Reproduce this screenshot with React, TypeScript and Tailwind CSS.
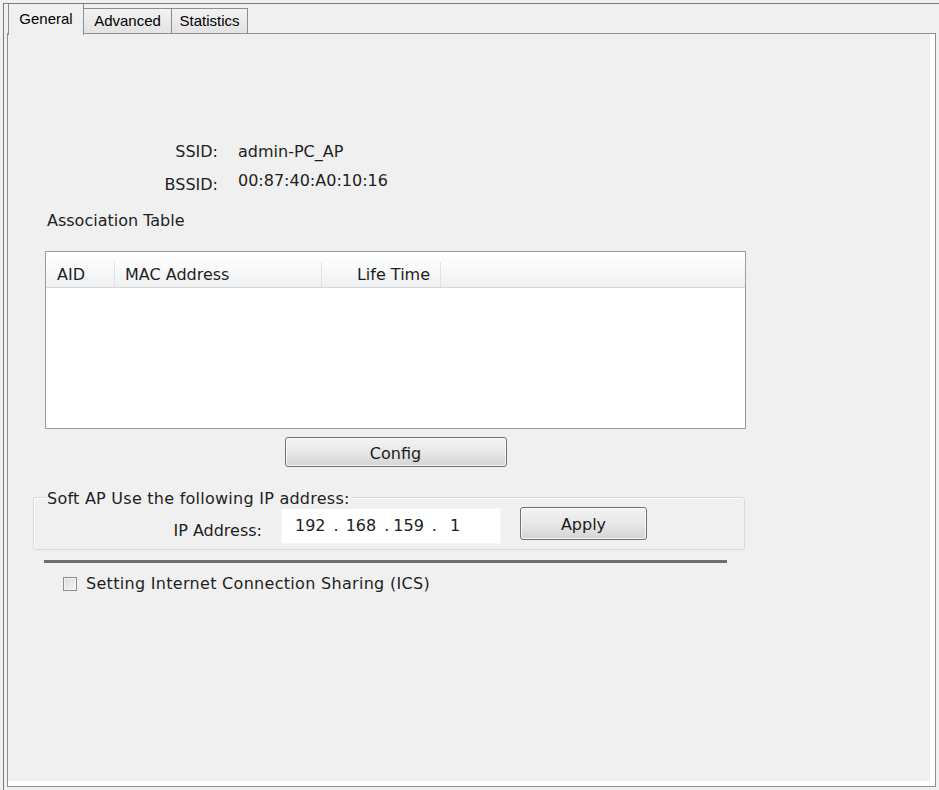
import React from 'react';

const ui = { fontFamily: '"DejaVu Sans", "Noto Sans", sans-serif' };
const tabFont = { fontFamily: '"Liberation Sans", Arial, sans-serif' };

function Tab({ label, active, width }: { label: string; active?: boolean; width: string }) {
  if (active) {
    return (
      <div
        className={`relative z-10 ${width} h-[31px] -mb-px border-x border-[#8b8d94] bg-[#f0f0f0] flex items-center justify-center text-[15px] text-black`}
        style={tabFont}
      >
        {label}
      </div>
    );
  }
  return (
    <div
      className={`${width} h-[25px] mt-[4px] border-t border-r border-[#8b8d94] bg-gradient-to-b from-[#f2f2f2] to-[#e3e3e3] flex items-center justify-center text-[15px] text-black`}
      style={tabFont}
    >
      {label}
    </div>
  );
}

function WinButton({ children, className }: { children: React.ReactNode; className: string }) {
  return (
    <button
      className={`${className} pt-[3px] rounded-[3px] border border-[#707070] bg-gradient-to-b from-[#f3f3f3] via-[#e8e8e8] to-[#d4d4d4] shadow-[inset_0_0_0_1px_rgba(255,255,255,0.8)] text-[16px] text-[#1a1a1a] flex items-center justify-center`}
    >
      {children}
    </button>
  );
}

export default function App() {
  return (
    <div className="w-[939px] h-[790px] bg-[#f0f0f0] overflow-hidden pl-[3px] pt-[3px]" style={ui}>
      <div className="h-full border-l border-t border-[#7c7c7c]">
        {/* tab strip */}
        <div className="flex h-[29px] ml-[4px]">
          <Tab label="General" active width="w-[76px]" />
          <Tab label="Advanced" width="w-[88px]" />
          <Tab label="Statistics" width="w-[76px]" />
        </div>

        {/* tab page */}
        <div className="ml-[3px] w-[929px] h-[754px] border border-[#8e8f92] bg-white">
          <div className="h-full border-r-[5px] border-b-[5px] border-white bg-[#f0f0f0] text-[16px] text-[#1e1e1e]">
            <div className="pt-[102px]">
              <div className="flex items-center h-[31px]">
                <span className="w-[210px] text-right">SSID:</span>
                <span className="ml-[20px]">admin-PC_AP</span>
              </div>
              <div className="flex items-center h-[31px]">
                <span className="w-[210px] text-right pt-[4px]">BSSID:</span>
                <span className="ml-[20px] pb-[4px]">00:87:40:A0:10:16</span>
              </div>
            </div>

            <div className="mt-[11px] h-[24px] flex items-center ml-[39px]">Association Table</div>

            {/* association table */}
            <div className="mt-[18px] ml-[37px] w-[701px] h-[178px] border border-[#9a9a9a] bg-white">
              <div className="flex h-[36px] pt-[10px] border-b border-[#d6d6d6] bg-gradient-to-b from-white via-[#f8f9fa] to-[#eff0f1]">
                <div className="w-[69px] pl-[11px] flex items-center border-r border-[#e2e2e2]">AID</div>
                <div className="w-[207px] pl-[10px] flex items-center border-r border-[#e2e2e2]">MAC Address</div>
                <div className="w-[119px] pr-[10px] flex items-center justify-end border-r border-[#e2e2e2]">Life Time</div>
                <div className="flex-1" />
              </div>
            </div>

            <div className="w-[701px] ml-[37px] mt-[8px] flex justify-center">
              <WinButton className="w-[222px] h-[30px]">Config</WinButton>
            </div>

            {/* soft AP group */}
            <div className="relative mt-[30px] ml-[25px] w-[712px] h-[53px] rounded-[3px] border border-[#d9d9d9] shadow-[inset_1px_1px_0_#ffffff] pt-[10px]">
              <span className="absolute left-[13px] -top-[9px] bg-[#f0f0f0] pr-[2px] leading-[20px] tracking-[0.25px]">
                Soft AP Use the following IP address:
              </span>
              <div className="flex items-start">
                <span className="w-[228px] text-right h-[36px] flex items-center justify-end pt-[10px]">IP Address:</span>
                <div className="ml-[19px] w-[220px] h-[36px] bg-white border border-[#f6f6f6] flex items-center pl-[13px]">
                  <span>192</span>
                  <span className="ml-[8px]">.</span>
                  <span className="ml-[7px]">168</span>
                  <span className="ml-[8px]">.</span>
                  <span className="ml-[4px]">159</span>
                  <span className="ml-[8px]">.</span>
                  <span className="ml-[13px]">1</span>
                </div>
                <WinButton className="ml-[19px] -mt-px w-[127px] h-[33px]">Apply</WinButton>
              </div>
            </div>

            <div className="mt-[10px] ml-[36px] w-[683px] h-[3px] bg-[#6e6e6e]" />

            <label className="mt-[12px] ml-[55px] flex items-center h-[18px]">
              <span className="w-[14px] h-[14px] border border-[#8f8f8f] bg-gradient-to-br from-[#dcdcdc] to-[#f7f7f7] shadow-[inset_0_0_0_1px_#f4f4f4]" />
              <span className="ml-[9px] tracking-[0.3px]">Setting Internet Connection Sharing (ICS)</span>
            </label>
          </div>
        </div>
      </div>
    </div>
  );
}
